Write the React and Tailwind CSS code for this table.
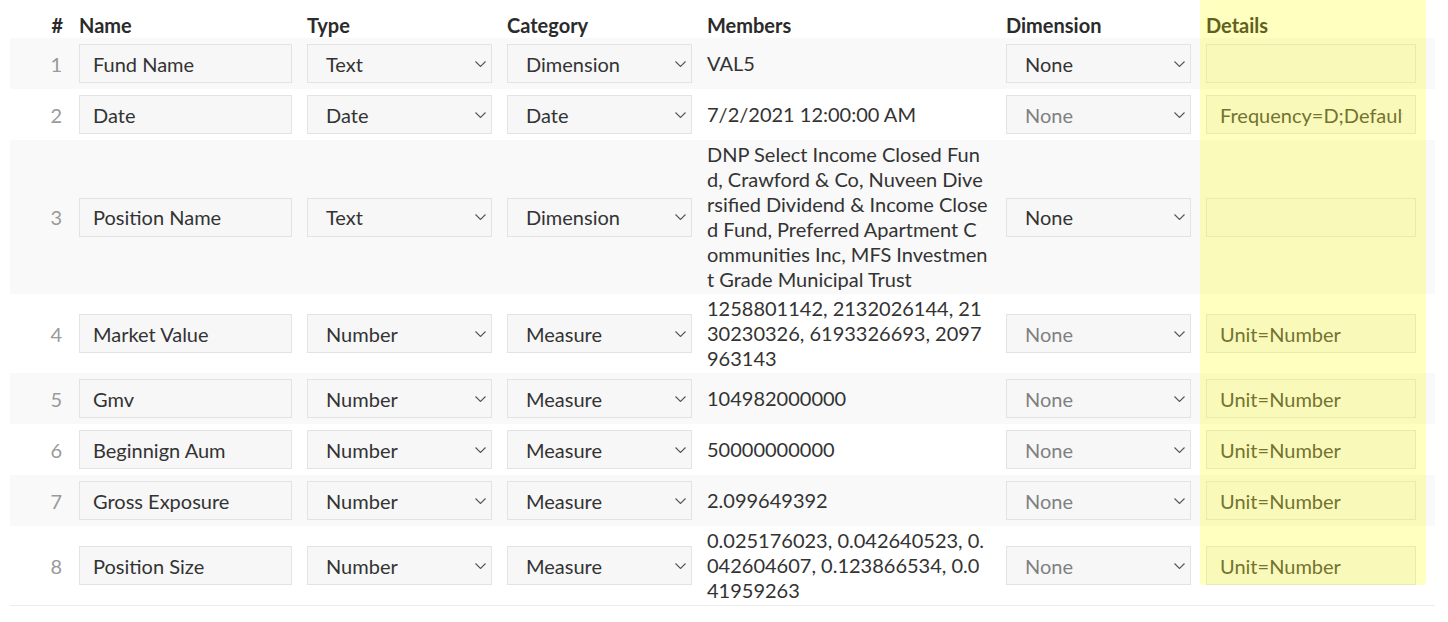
import React from "react";

const rows = [
  { name: "Fund Name", type: "Text", category: "Dimension", members: ["VAL5"], dimDisabled: false, details: "" },
  { name: "Date", type: "Date", category: "Date", members: ["7/2/2021 12:00:00 AM"], dimDisabled: true, details: "Frequency=D;Default" },
  {
    name: "Position Name",
    type: "Text",
    category: "Dimension",
    members: [
      "DNP Select Income Closed Fun",
      "d, Crawford & Co, Nuveen Dive",
      "rsified Dividend & Income Close",
      "d Fund, Preferred Apartment C",
      "ommunities Inc, MFS Investmen",
      "t Grade Municipal Trust",
    ],
    dimDisabled: false,
    details: "",
  },
  {
    name: "Market Value",
    type: "Number",
    category: "Measure",
    members: ["1258801142, 2132026144, 21", "30230326, 6193326693, 2097", "963143"],
    dimDisabled: true,
    details: "Unit=Number",
  },
  { name: "Gmv", type: "Number", category: "Measure", members: ["104982000000"], dimDisabled: true, details: "Unit=Number" },
  { name: "Beginnign Aum", type: "Number", category: "Measure", members: ["50000000000"], dimDisabled: true, details: "Unit=Number" },
  { name: "Gross Exposure", type: "Number", category: "Measure", members: ["2.099649392"], dimDisabled: true, details: "Unit=Number" },
  {
    name: "Position Size",
    type: "Number",
    category: "Measure",
    members: ["0.025176023, 0.042640523, 0.", "042604607, 0.123866534, 0.0", "41959263"],
    dimDisabled: true,
    details: "Unit=Number",
  },
];

const grid =
  "grid grid-cols-[54px_213px_185px_185px_284px_185px_210px] gap-x-[15px] items-center pr-[19px]";

function Chevron() {
  return (
    <svg width="11" height="6" viewBox="0 0 11 6" className="shrink-0 mr-[5px]">
      <polyline points="0.5,0.5 5.5,5.5 10.5,0.5" fill="none" stroke="#555" strokeWidth="1.1" />
    </svg>
  );
}

function Select({ value, disabled }) {
  return (
    <div className="h-[39px] flex items-center justify-between bg-[#f7f7f7] border border-[#e3e3e3] pl-[18px]">
      <span className={disabled ? "text-[#808080]" : "text-[#333]"}>{value}</span>
      <Chevron />
    </div>
  );
}

function TextBox({ value, muted }) {
  return (
    <div className="h-[39px] flex items-center bg-[#f7f7f7] border border-[#e3e3e3] pl-[13px] pr-[12px]">
      <div
        className={`w-full overflow-hidden whitespace-nowrap ${muted ? "text-[#444]" : "text-[#333]"}`}
      >
        {value}
      </div>
    </div>
  );
}

export default function App() {
  return (
    <div className="bg-white min-h-[622px] font-['Lato',sans-serif] text-[20px] text-[#333]">
      <div className="relative ml-[10px] pt-[10px] w-[1425px]">
        <div className={`${grid} h-[28px] font-bold text-[#2b2b2b]`}>
          <div className="text-right pr-[1px]">#</div>
          <div>Name</div>
          <div>Type</div>
          <div>Category</div>
          <div>Members</div>
          <div>Dimension</div>
          <div>Details</div>
        </div>
        <div className="border-b border-[#ececec]">
          {rows.map((row, index) => (
            <div key={index} className={`${grid} ${index % 2 === 0 ? "bg-[#f9f9f9]" : "bg-white"}`}>
              <div className="text-right pr-[2px] text-[#9a9a9a]">{index + 1}</div>
              <div className="py-[6px]">
                <TextBox value={row.name} />
              </div>
              <div className="py-[6px]">
                <Select value={row.type} />
              </div>
              <div className="py-[6px]">
                <Select value={row.category} />
              </div>
              <div className="py-[2px] leading-[25px] whitespace-nowrap">
                {row.members.map((line, i) => (
                  <div key={i}>{line}</div>
                ))}
              </div>
              <div className="py-[6px]">
                <Select value="None" disabled={row.dimDisabled} />
              </div>
              <div className="py-[6px]">
                <TextBox value={row.details} muted />
              </div>
            </div>
          ))}
        </div>
        <div className="absolute left-[1190px] top-0 w-[226px] h-[585px] rounded-[3px] bg-[#ffff00]/25 pointer-events-none"></div>
      </div>
    </div>
  );
}
